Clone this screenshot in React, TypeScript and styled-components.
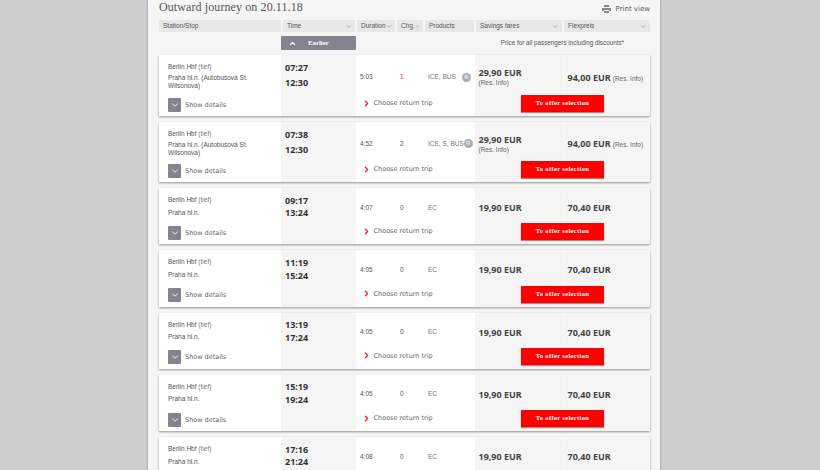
import React from 'react'
import styled, { createGlobalStyle } from 'styled-components'
import { ChevronDown, ChevronUp, ChevronRight } from 'lucide-react'

const GlobalStyle = createGlobalStyle`
  html, body {
    margin: 0;
    height: 470px;
    overflow: hidden;
    background: #cdcdcd;
    font-family: 'Liberation Sans', Arial, sans-serif;
    color: #444;
  }
`

const Page = styled.div`
  width: 512px;
  height: 470px;
  margin-left: 148px;
  box-sizing: border-box;
  background: #f5f5f5;
  box-shadow: 0 0 2px rgba(0, 0, 0, 0.35);
  padding: 0 10px 0 11px;
  overflow: hidden;
`

const TitleRow = styled.div`
  display: flex;
  justify-content: space-between;
  align-items: center;
  height: 20px;
  padding-bottom: 5px;
  box-sizing: border-box;
`

const Title = styled.h1`
  margin: 0;
  font: 400 12px/15px 'Liberation Serif', serif;
  letter-spacing: 0.1px;
  color: #555;
`

const PrintLink = styled.div`
  display: flex;
  align-items: center;
  gap: 5px;
  font: 400 7px/10px 'DejaVu Sans', sans-serif;
  color: #555;
  margin-top: 3px;
`

const HeaderRow = styled.div`
  display: grid;
  grid-template-columns: 122px 72px 38px 26px 49px 86px 86px;
  column-gap: 2px;
  height: 12px;
`

const HeaderCell = styled.div`
  display: flex;
  align-items: center;
  justify-content: space-between;
  background: #e7e7e7;
  height: 12px;
  padding: 0 3px 0 4px;
  min-width: 0;
  white-space: nowrap;
  font: 400 6.5px/12px 'Liberation Sans', sans-serif;
  color: #555;
`

const EarlierRow = styled.div`
  display: flex;
  align-items: center;
  height: 14px;
  margin: 4px 0 5px;
`

const EarlierButton = styled.div`
  width: 75px;
  height: 14px;
  margin-left: 122px;
  background: #82858f;
  border-radius: 1px;
  display: flex;
  align-items: center;
  color: #fff;
  font: 700 6.8px/14px 'Liberation Serif', serif;
  padding-left: 7px;
  box-sizing: border-box;
  gap: 11px;
`

const PriceNote = styled.div`
  margin-left: auto;
  margin-right: 26px;
  font: 400 6.3px/14px 'Liberation Sans', sans-serif;
  color: #555;
`

const Card = styled.div<{ $height: number }>`
  display: grid;
  grid-template-columns: 122px 75px 1fr;
  height: ${p => p.$height}px;
  margin-bottom: 6px;
  background: #fff;
  box-shadow: 0 1px 2px rgba(0, 0, 0, 0.4);
`

const StationCell = styled.div`
  padding: 8px 0 0 9px;
  display: flex;
  flex-direction: column;
`

const Station = styled.div<{ $tight?: boolean }>`
  font: 400 6.5px/8.7px 'Liberation Sans', sans-serif;
  color: #555;
  margin-bottom: ${p => (p.$tight ? 2 : 4)}px;
  width: 92px;
`

const Tief = styled.span`
  color: #777;
`

const DetailsRow = styled.div`
  display: flex;
  align-items: center;
  gap: 4px;
  margin-top: auto;
  margin-bottom: 4.5px;
  font: 400 6.5px/14px 'DejaVu Sans', sans-serif;
  color: #666;
`

const ToggleBox = styled.div`
  width: 13px;
  height: 14px;
  background: #82858f;
  border-radius: 1px;
  color: #fff;
  display: flex;
  align-items: center;
  justify-content: center;
`

const TimeCell = styled.div<{ $tight?: boolean }>`
  background: #f5f5f5;
  padding: ${p => (p.$tight ? 6 : 6.6)}px 0 0 4px;
  font: 700 9px/${p => (p.$tight ? 14.5 : 12.7)}px 'Noto Sans', sans-serif;
  color: #333;
`

const Details = styled.div`
  display: grid;
  grid-template-columns: 119px 88px 87px;
  grid-template-rows: 1fr 21px;
  min-width: 0;
`

const InfoCell = styled.div`
  display: grid;
  grid-template-columns: 40px 28px 1fr;
  align-items: center;
  padding: 4px 4px 0;
  font: 400 6.5px/10px 'Liberation Sans', sans-serif;
  color: #555;
`

const Changes = styled.div`
  color: #555;
`

const RedChanges = styled(Changes)`
  color: #e33;
`

const Products = styled.div`
  display: flex;
  justify-content: space-between;
  align-items: center;
  white-space: nowrap;
  color: #777;
`

const ResBadge = styled.span`
  width: 9px;
  height: 9px;
  border-radius: 50%;
  background: #a9adb5;
  color: #e4e5e8;
  font: 700 6px/9px 'Liberation Sans', sans-serif;
  text-align: center;
`

const PriceCell = styled.div<{ $divider?: boolean }>`
  background: #f5f5f5;
  display: flex;
  flex-direction: column;
  justify-content: center;
  padding: 4px 0 0 3.5px;
  min-width: 0;
  border-left: ${p => (p.$divider ? '1px solid #fafafa' : 'none')};
`

const Price = styled.div`
  display: flex;
  align-items: baseline;
  gap: 2px;
  white-space: nowrap;
  font: 700 9px/11px 'Noto Sans', sans-serif;
  color: #444;
`

const ResInfo = styled.span`
  font: 400 6.5px/9px 'Liberation Sans', sans-serif;
  color: #666;
`

const ReturnCell = styled.div`
  display: flex;
  align-items: center;
  gap: 3px;
  padding-left: 5.5px;
  margin-bottom: 5px;
  font: 400 6.5px/14px 'DejaVu Sans', sans-serif;
  color: #666;
`

const ActionCell = styled.div`
  grid-column: span 2;
  background: #f5f5f5;
  display: flex;
  justify-content: center;
  align-items: flex-start;
`

const OfferButton = styled.div`
  width: 83px;
  height: 17px;
  background: #f00;
  color: #fff;
  text-align: center;
  font: 700 6.5px/16.5px 'Liberation Serif', serif;
  letter-spacing: 0.35px;
  box-shadow: 0 1px 1px rgba(0, 0, 0, 0.4);
`

type Journey = {
  dep: string
  arr: string
  to: string
  duration: string
  changes: string
  products: string
  save: string
  flex: string
  res?: boolean
  height: number
}

const journeys: Journey[] = [
  { dep: '07:27', arr: '12:30', to: 'Praha hl.n. (Autobusová St. Wilsonova)', duration: '5:03', changes: '1', products: 'ICE, BUS', save: '29,90 EUR', flex: '94,00 EUR', res: true, height: 61 },
  { dep: '07:38', arr: '12:30', to: 'Praha hl.n. (Autobusová St. Wilsonova)', duration: '4:52', changes: '2', products: 'ICE, S, BUS', save: '29,90 EUR', flex: '94,00 EUR', res: true, height: 60 },
  { dep: '09:17', arr: '13:24', to: 'Praha hl.n.', duration: '4:07', changes: '0', products: 'EC', save: '19,90 EUR', flex: '70,40 EUR', height: 56.25 },
  { dep: '11:19', arr: '15:24', to: 'Praha hl.n.', duration: '4:05', changes: '0', products: 'EC', save: '19,90 EUR', flex: '70,40 EUR', height: 56.25 },
  { dep: '13:19', arr: '17:24', to: 'Praha hl.n.', duration: '4:05', changes: '0', products: 'EC', save: '19,90 EUR', flex: '70,40 EUR', height: 56.25 },
  { dep: '15:19', arr: '19:24', to: 'Praha hl.n.', duration: '4:05', changes: '0', products: 'EC', save: '19,90 EUR', flex: '70,40 EUR', height: 56.25 },
  { dep: '17:16', arr: '21:24', to: 'Praha hl.n.', duration: '4:08', changes: '0', products: 'EC', save: '19,90 EUR', flex: '70,40 EUR', height: 56.25 },
]

const headers = ['Time', 'Duration', 'Chg.', 'Products', 'Savings fares', 'Flexpreis']

function JourneyCard({ j }: { j: Journey }) {
  const ChangeText = j.changes === '1' ? RedChanges : Changes
  return (
    <Card $height={j.height}>
      <StationCell>
        <Station $tight={j.res}>Berlin Hbf <Tief>(tief)</Tief></Station>
        <Station $tight={j.res}>{j.to}</Station>
        <DetailsRow>
          <ToggleBox><ChevronDown size={10} strokeWidth={2} /></ToggleBox>
          Show details
        </DetailsRow>
      </StationCell>
      <TimeCell $tight={j.res}>
        {j.dep}
        <br />
        {j.arr}
      </TimeCell>
      <Details>
        <InfoCell>
          <div>{j.duration}</div>
          <ChangeText>{j.changes}</ChangeText>
          <Products>
            {j.products}
            {j.res && <ResBadge>R</ResBadge>}
          </Products>
        </InfoCell>
        <PriceCell>
          <Price>{j.save}</Price>
          {j.res && <ResInfo>(Res. Info)</ResInfo>}
        </PriceCell>
        <PriceCell $divider>
          <Price>
            {j.flex}
            {j.res && <ResInfo>(Res. Info)</ResInfo>}
          </Price>
        </PriceCell>
        <ReturnCell>
          <ChevronRight size={9} color="#f02020" strokeWidth={3.5} />
          Choose return trip
        </ReturnCell>
        <ActionCell>
          <OfferButton>To offer selection</OfferButton>
        </ActionCell>
      </Details>
    </Card>
  )
}

export default function App() {
  return (
    <Page>
      <GlobalStyle />
      <TitleRow>
        <Title>Outward journey on 20.11.18</Title>
        <PrintLink>
          <svg width="9" height="8" viewBox="0 0 9 8">
            <path d="M2 0h5v2H2zM0 3h9v3H7V5H2v1H0zM2 6h5v2H2z" fill="#888" />
          </svg>
          Print view
        </PrintLink>
      </TitleRow>
      <HeaderRow>
        <HeaderCell>Station/Stop</HeaderCell>
        {headers.map(h => (
          <HeaderCell key={h}>
            {h}
            {h !== 'Products' && <ChevronDown size={7} color="#777" />}
          </HeaderCell>
        ))}
      </HeaderRow>
      <EarlierRow>
        <EarlierButton>
          <ChevronUp size={9} strokeWidth={3} />
          Earlier
        </EarlierButton>
        <PriceNote>Price for all passengers including discounts*</PriceNote>
      </EarlierRow>
      {journeys.map(j => (
        <JourneyCard key={j.dep} j={j} />
      ))}
    </Page>
  )
}
